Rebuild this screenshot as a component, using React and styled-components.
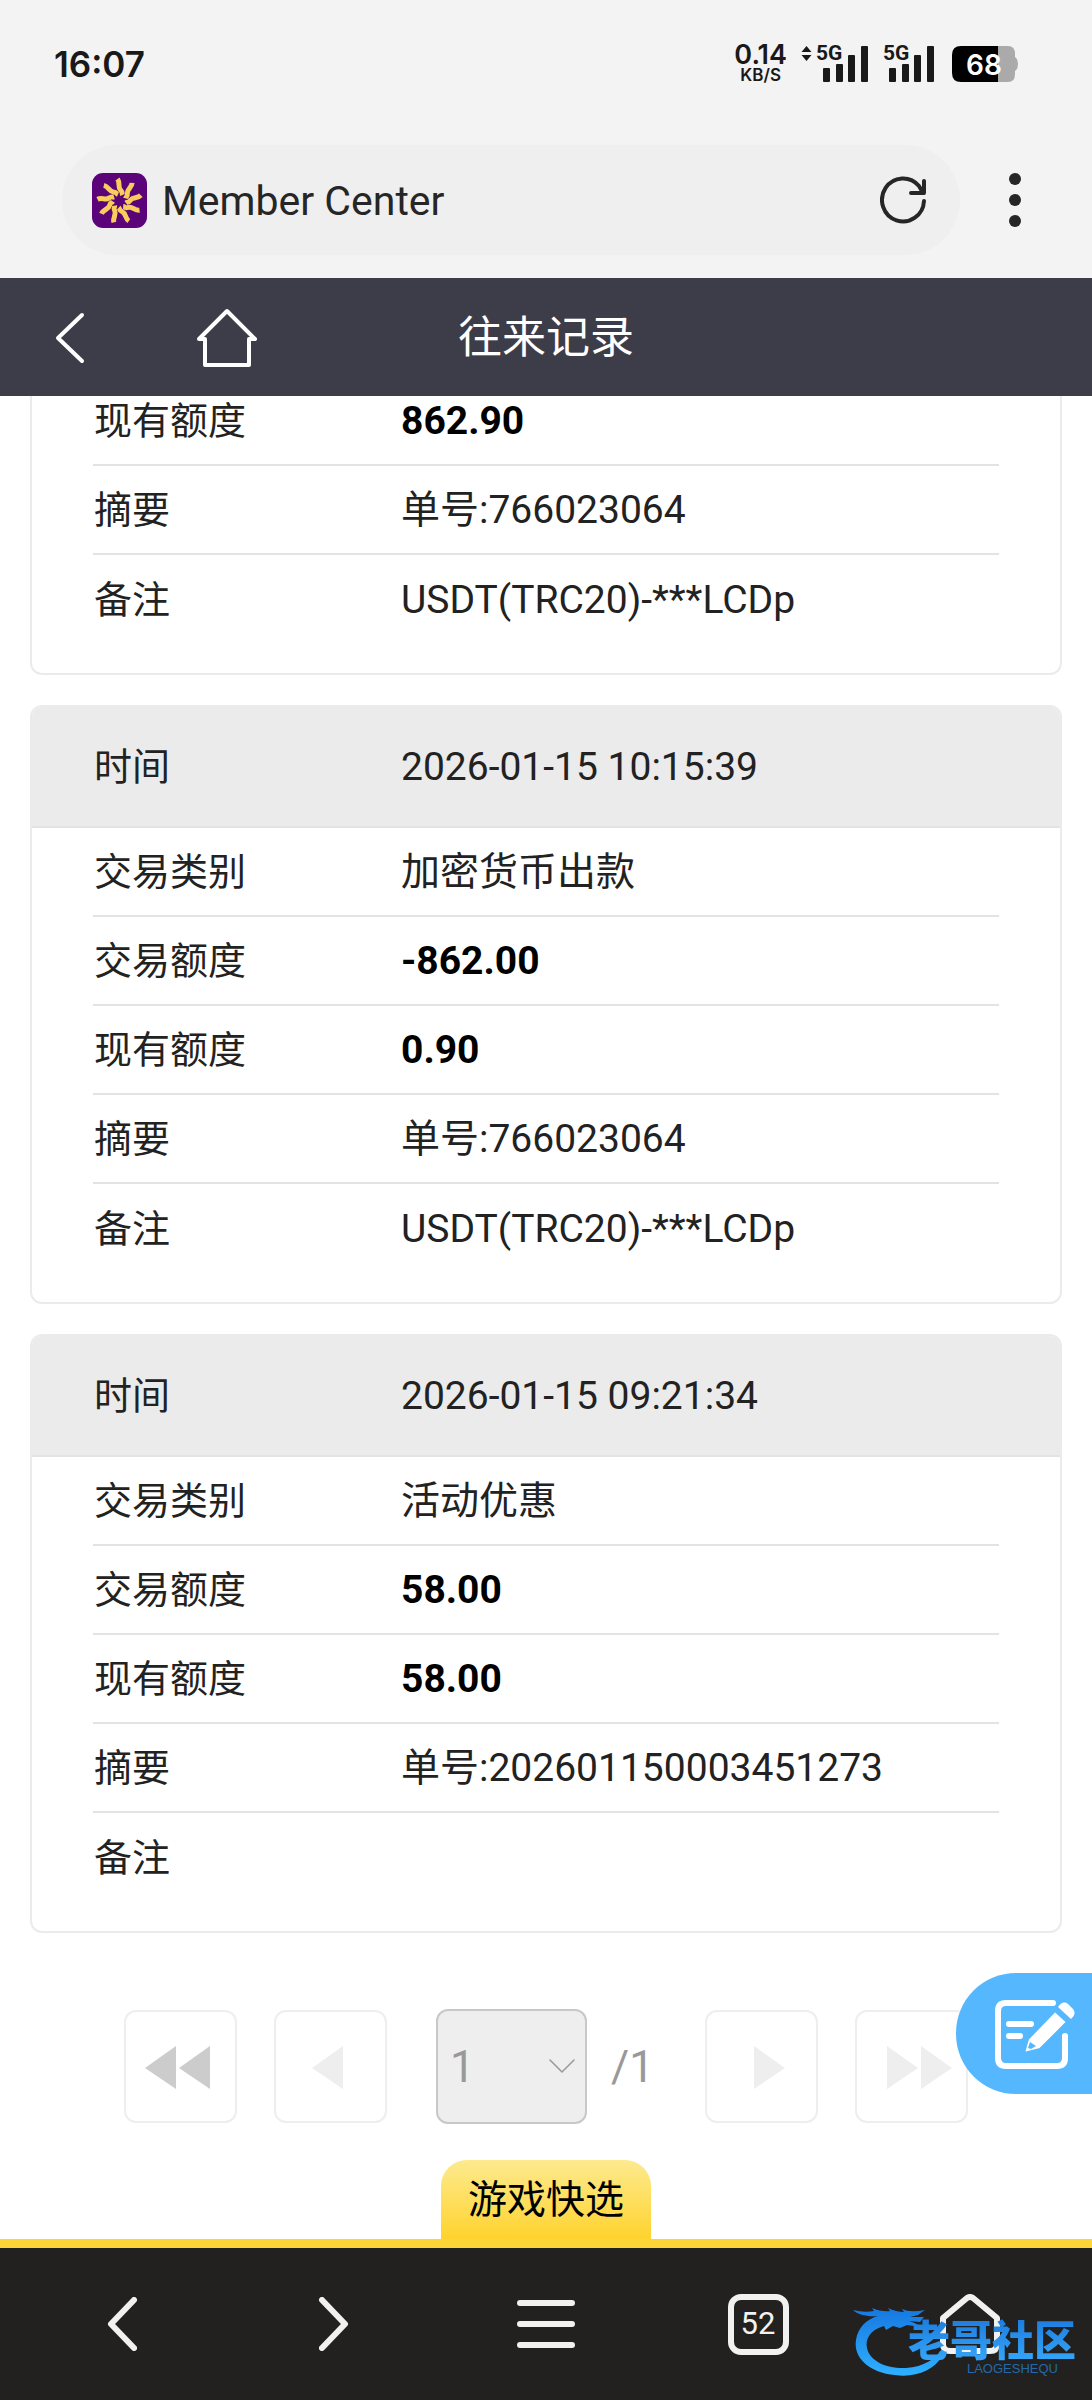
// src/App.jsx

import { useState } from "react";
import styled, { createGlobalStyle } from "styled-components";

const GlobalStyle = createGlobalStyle`
  *,
  *::before,
  *::after {
    box-sizing: border-box;
  }

  body {
    margin: 0;
    background: #fff;
    color: #222;
    font-family: Roboto, "Noto Sans CJK SC", sans-serif;
  }

  button,
  select {
    font-family: inherit;
  }
`;

const Page = styled.div`
  display: flex;
  flex-direction: column;
  min-height: 100vh;
`;

const IconButton = styled.button`
  display: flex;
  align-items: center;
  justify-content: center;
  padding: 0;
  border: none;
  background: none;
  color: inherit;
  cursor: pointer;
`;

/* ---------- phone status bar ---------- */

const StatusBar = styled.div`
  display: flex;
  align-items: center;
  justify-content: space-between;
  height: 124px;
  padding: 4px 74px 0 54px;
  background: #f3f3f3;
  color: #191919;
  font-family: Inter, sans-serif;
`;

const Clock = styled.time`
  font-size: 35px;
  font-weight: 600;
  line-height: 40px;
`;

const StatusIcons = styled.div`
  display: flex;
  align-items: center;
`;

const NetSpeed = styled.div`
  display: flex;
  flex-direction: column;
  align-items: center;
  margin-right: 14px;
  font-size: 27px;
  font-weight: 600;
  line-height: 22px;
`;

const NetUnit = styled.span`
  font-size: 17px;
  line-height: 18px;
`;

const Signal = styled.div`
  position: relative;
  display: flex;
  margin-right: ${({ $gap }) => $gap}px;
`;

const SignalLabel = styled.span`
  position: absolute;
  top: -3px;
  left: ${({ $left }) => $left}px;
  font-family: Roboto, sans-serif;
  font-size: 21px;
  font-weight: 700;
  line-height: 21px;
`;

const Battery = styled.div`
  position: relative;
  display: flex;
`;

const BatteryLevel = styled.span`
  position: absolute;
  inset: 0 2px 0 0;
  color: #fff;
  font-size: 28px;
  font-weight: 600;
  line-height: 38px;
  text-align: center;
`;

/* ---------- browser address bar ---------- */

const BrowserBar = styled.div`
  display: flex;
  align-items: center;
  height: 154px;
  padding: 0 22px 2px 62px;
  background: #f3f3f3;
  color: #262626;
`;

const AddressPill = styled.div`
  display: flex;
  flex: 1;
  align-items: center;
  gap: 15px;
  height: 110px;
  padding: 0 34px 0 30px;
  border-radius: 55px;
  background: #efefef;
`;

const PageName = styled.span`
  flex: 1;
  padding-top: 2px;
  font-size: 41px;
  line-height: 48px;
`;

const MenuButton = styled(IconButton)`
  width: 110px;
  height: 110px;
`;

/* ---------- site header ---------- */

const Header = styled.header`
  display: grid;
  grid-template-columns: 1fr auto 1fr;
  align-items: center;
  height: 118px;
  padding: 2px 46px 0;
  background: #3d3c49;
  color: #fff;
`;

const HeaderNav = styled.nav`
  display: flex;
  align-items: center;
  gap: 110px;
`;

const Title = styled.h1`
  margin: 0;
  font-size: 44px;
  font-weight: 400;
  line-height: 64px;
`;

/* ---------- records ---------- */

const Main = styled.main`
  flex: 1;
  overflow: hidden;
`;

const RecordList = styled.div`
  display: flex;
  flex-direction: column;
  gap: 30px;
  margin-top: -19px;
  padding: 0 30px;
`;

const Card = styled.dl`
  margin: 0;
  padding-bottom: 29px;
  border: 2px solid #ebebeb;
  border-radius: 12px;
  background: #fff;
  overflow: hidden;

  ${({ $open }) => $open && "border-top: none;"}
`;

const Row = styled.div`
  display: grid;
  grid-template-columns: 308px 1fr;
  align-items: center;
  height: 89px;
  margin: 0 61px;
  border-bottom: 2px solid #e3e3e3;
  font-size: 39px;
  line-height: 56px;

  &:last-child {
    border-bottom: none;
  }
`;

const HeadRow = styled(Row)`
  height: 121px;
  margin: 0;
  padding: 0 61px;
  background: #ebebeb;
`;

const Label = styled.dt`
  padding-left: 1px;
  font-size: 38px;
`;

const Value = styled.dd`
  margin: 0;
  ${({ $strong }) => $strong && "color: #000; font-weight: 700;"}
`;

/* ---------- pager ---------- */

const Pager = styled.nav`
  display: flex;
  align-items: center;
  justify-content: center;
  gap: 37px;
  padding: 76px 30px 36px;
`;

const PagerButton = styled.button`
  display: flex;
  align-items: center;
  justify-content: center;
  width: 113px;
  height: 113px;
  padding: ${({ $forward }) => ($forward ? "0 0 0 14px" : "0 6px 0 0")};
  border: 2px solid #eee;
  border-radius: 12px;
  background: #fff;
  color: ${({ $dark }) => ($dark ? "#ccc" : "#eee")};
`;

const PagerCurrent = styled.div`
  display: flex;
  align-items: center;
  gap: 24px;
  margin-left: 12px;
  color: #999;
  font-size: 44px;
`;

const SelectBox = styled.div`
  position: relative;
  width: 151px;

  svg {
    position: absolute;
    top: 50px;
    right: 12px;
    pointer-events: none;
  }
`;

const PageSelect = styled.select`
  appearance: none;
  display: block;
  width: 100%;
  height: 115px;
  padding: 0 12px;
  border: 2px solid #c8c8c8;
  border-radius: 12px;
  background: #eee;
  color: #999;
  font-size: 44px;
  opacity: 1;
`;

const PageTotal = styled.span`
  min-width: 57px;
`;

/* ---------- bottom bars ---------- */

const Footer = styled.footer`
  position: relative;
  display: flex;
  flex-direction: column;
  align-items: center;
`;

const FeedbackButton = styled(IconButton)`
  position: absolute;
  right: 0;
  bottom: 306px;
  justify-content: flex-start;
  width: 136px;
  height: 121px;
  padding-left: 37px;
  border-radius: 60px 0 0 60px;
  background: #55b8ff;
  color: #fff;
`;

const QuickTab = styled.button`
  height: 79px;
  padding: 0 27px;
  border: none;
  border-radius: 26px 26px 0 0;
  background: linear-gradient(#fdea8f, #ffd32e);
  color: #000;
  font-size: 39px;
  line-height: 56px;
`;

const BottomNav = styled.nav`
  display: grid;
  grid-template-columns: repeat(5, 1fr);
  align-items: center;
  width: 100%;
  height: 161px;
  padding: 0 16px;
  border-top: 9px solid #fdd535;
  background: #22211f;
  color: #f1f1f1;
`;

const NavButton = styled(IconButton)`
  height: 100px;
`;

const TabCount = styled.span`
  display: flex;
  align-items: center;
  justify-content: center;
  width: 61px;
  height: 61px;
  border: 6px solid #f1f1f1;
  border-radius: 13px;
  font-size: 31px;
  line-height: 36px;
`;

const Watermark = styled.div`
  position: absolute;
  right: 16px;
  bottom: 22px;
  width: 224px;
  height: 76px;
  pointer-events: none;

  svg {
    position: absolute;
    top: 0;
    left: 0;
  }
`;

const WatermarkText = styled.div`
  position: absolute;
  top: 12px;
  right: 0;
  display: flex;
  flex-direction: column;
  align-items: flex-end;
`;

const WatermarkName = styled.span`
  background: linear-gradient(#1a78dc, #36a6f8);
  background-clip: text;
  color: transparent;
  font-family: "Noto Sans CJK SC", sans-serif;
  font-size: 42px;
  font-weight: 900;
  line-height: 48px;
`;

const WatermarkSub = styled.span`
  margin-right: 18px;
  color: #246aa8;
  font-family: "Liberation Sans", sans-serif;
  font-size: 13px;
  line-height: 14px;
`;

/* ---------- icons ---------- */

const line = {
  fill: "none",
  stroke: "currentColor",
  strokeLinecap: "round",
  strokeLinejoin: "round",
};

const SignalBars = ({ arrows }) => (
  <svg width={arrows ? 67 : 51} height="36" viewBox={arrows ? "0 0 67 36" : "16 0 51 36"} fill="currentColor" aria-hidden="true">
    {arrows && <path d="M5.500 0 10.500 6H.500zM.500 9h10l-5 6z" />}
    <rect x="22" y="22" width="7" height="14" rx="1" />
    <rect x="35" y="18" width="7" height="18" rx="1" />
    <rect x="47" y="9" width="7" height="27" rx="1" />
    <rect x="60" y="0" width="7" height="36" rx="1" />
  </svg>
);

const BatteryShape = () => (
  <svg width="66" height="36" viewBox="0 0 66 36" aria-hidden="true">
    <path d="M46 0h10q7 0 7 8v3q3 2 3 7t-3 7v3q0 8-7 8H46z" fill="#aaa" />
    <path d="M9 0h37v36H9q-9 0-9-9V9q0-9 9-9z" fill="#000" />
  </svg>
);

const SiteLogo = () => (
  <svg width="55" height="55" viewBox="0 0 55 55" aria-hidden="true">
    <rect width="55" height="55" rx="11" fill="#5b0378" />
    {Array.from({ length: 9 }, (_, i) => (
      <path
        key={i}
        d="M-2-22C1-18-2-14 1-11S2-8 3-6"
        transform={`translate(27.500 28) rotate(${i * 40})`}
        fill="none"
        stroke="#f8cd5c"
        strokeWidth="5"
      />
    ))}
  </svg>
);

const ReloadIcon = () => (
  <svg width="46" height="48" viewBox="0 0 46 48" {...line} strokeWidth="4" aria-hidden="true">
    <path d="M44 25A21 21.500 0 1 1 39 10L43 17" />
    <path d="M44 5V17H31" />
  </svg>
);

const DotsIcon = () => (
  <svg width="12" height="56" viewBox="0 0 12 56" fill="currentColor" aria-hidden="true">
    <circle cx="6" cy="7" r="6" />
    <circle cx="6" cy="28" r="6" />
    <circle cx="6" cy="49" r="6" />
  </svg>
);

const HeaderBack = () => (
  <svg width="40" height="54" viewBox="0 0 40 54" {...line} strokeWidth="4" aria-hidden="true">
    <path d="M36 4 12 27 36 50" />
  </svg>
);

const HeaderHome = () => (
  <svg width="62" height="60" viewBox="0 0 62 60" {...line} strokeWidth="4" aria-hidden="true">
    <path d="M9 31H3L31 3 59 31H53V57H9z" />
  </svg>
);

const Triangles = ({ left, double }) => (
  <svg width={double ? 66 : 32} height="44" viewBox={double ? "0 0 66 44" : "0 0 32 44"} fill="currentColor" aria-hidden="true">
    <g transform={left ? undefined : `translate(${double ? 66 : 32} 0) scale(-1 1)`}>
      <path d="M0 23 31 1V44z" />
      {double && <path d="M34 23 65 1V44z" />}
    </g>
  </svg>
);

const ChevronDown = () => (
  <svg width="27" height="15" viewBox="0 0 27 15" {...line} stroke="#999" strokeWidth="1.500" aria-hidden="true">
    <path d="M2 1 14 13 26 1" />
  </svg>
);

const FeedbackIcon = () => (
  <svg width="82" height="72" viewBox="0 0 82 72" aria-hidden="true">
    <g {...line} strokeWidth="6">
      <path d="M60 5H13Q5 5 5 13V60Q5 68 13 68H64Q72 68 72 60V38" />
      <path d="M16 26H38M16 38H27" />
    </g>
    <path
      d="M62 13 74 24 47 51 31 55 35 41z"
      fill="currentColor"
      stroke="#55b8ff"
      strokeWidth="2"
    />
    <path d="M65 9Q70 2 75 6L80 11Q84 16 78 21z" fill="currentColor" />
    <path d="M37 44 43 48 38 51 35 50z" fill="#55b8ff" />
  </svg>
);

const NavChevron = ({ right }) => (
  <svg width="30" height="54" viewBox="0 0 30 54" {...line} strokeWidth="6" aria-hidden="true">
    <path d={right ? "M3 3 26 27 3 51" : "M27 3 4 27 27 51"} />
  </svg>
);

const MenuIcon = () => (
  <svg width="58" height="48" viewBox="0 0 58 48" {...line} strokeWidth="6" aria-hidden="true">
    <path d="M3 3H55M3 24H55M3 45H55" />
  </svg>
);

const NavHome = () => (
  <svg width="60" height="60" viewBox="0 0 60 60" {...line} strokeWidth="6" aria-hidden="true">
    <path d="M3 24 27 4Q30 2 33 4L57 24V50Q57 57 50 57H10Q3 57 3 50z" />
  </svg>
);

const DragonMark = () => (
  <svg width="100" height="76" viewBox="0 0 100 76" aria-hidden="true">
    <defs>
      <linearGradient id="dragon" x1="0" y1="0" x2="0" y2="1">
        <stop offset="0" stopColor="#1678e0" />
        <stop offset="1" stopColor="#2fb0ff" />
      </linearGradient>
    </defs>
    <path
      fill="url(#dragon)"
      d="M1 8Q12 11 22 9L20 6Q30 10 38 9L36 6Q44 10 52 10L50 7Q58 11 73 8L66 13 58 15H72L68 20 57 19Q66 22 69 25L55 23 48 26 41 24 34 28 32 24C18 28 13 37 15 46 18 60 36 67 54 66 72 65 84 56 88 49 92 47 93 50 91 53 82 69 62 76 43 73 18 71 1 56 4 38 6 25 15 17 26 14 16 15 6 13 1 8z"
    />
  </svg>
);

/* ---------- data ---------- */

const records = [
  {
    id: "deposit",
    rows: [
      { label: "现有额度", value: "862.90", strong: true },
      { label: "摘要", value: "单号:766023064" },
      { label: "备注", value: "USDT(TRC20)-***LCDp" },
    ],
  },
  {
    id: "withdraw",
    time: "2026-01-15 10:15:39",
    rows: [
      { label: "交易类别", value: "加密货币出款" },
      { label: "交易额度", value: "-862.00", strong: true },
      { label: "现有额度", value: "0.90", strong: true },
      { label: "摘要", value: "单号:766023064" },
      { label: "备注", value: "USDT(TRC20)-***LCDp" },
    ],
  },
  {
    id: "bonus",
    time: "2026-01-15 09:21:34",
    rows: [
      { label: "交易类别", value: "活动优惠" },
      { label: "交易额度", value: "58.00", strong: true },
      { label: "现有额度", value: "58.00", strong: true },
      { label: "摘要", value: "单号:202601150003451273" },
      { label: "备注", value: "" },
    ],
  },
];

function RecordCard({ record }) {
  return (
    <Card $open={!record.time}>
      {record.time && (
        <HeadRow>
          <Label>时间</Label>
          <Value>{record.time}</Value>
        </HeadRow>
      )}
      {record.rows.map((row) => (
        <Row key={row.label}>
          <Label>{row.label}</Label>
          <Value $strong={row.strong}>{row.value}</Value>
        </Row>
      ))}
    </Card>
  );
}

export default function App() {
  const [page, setPage] = useState("1");

  return (
    <>
      <GlobalStyle />
      <Page>
        <StatusBar>
          <Clock>16:07</Clock>
          <StatusIcons>
            <NetSpeed>
              0.14
              <NetUnit>KB/S</NetUnit>
            </NetSpeed>
            <Signal $gap={15}>
              <SignalBars arrows />
              <SignalLabel $left={15}>5G</SignalLabel>
            </Signal>
            <Signal $gap={18}>
              <SignalBars />
              <SignalLabel $left={0}>5G</SignalLabel>
            </Signal>
            <Battery>
              <BatteryShape />
              <BatteryLevel>68</BatteryLevel>
            </Battery>
          </StatusIcons>
        </StatusBar>

        <BrowserBar>
          <AddressPill>
            <SiteLogo />
            <PageName>Member Center</PageName>
            <IconButton type="button" aria-label="刷新">
              <ReloadIcon />
            </IconButton>
          </AddressPill>
          <MenuButton type="button" aria-label="更多">
            <DotsIcon />
          </MenuButton>
        </BrowserBar>

        <Header>
          <HeaderNav>
            <IconButton type="button" aria-label="返回">
              <HeaderBack />
            </IconButton>
            <IconButton type="button" aria-label="首页">
              <HeaderHome />
            </IconButton>
          </HeaderNav>
          <Title>往来记录</Title>
        </Header>

        <Main>
          <RecordList>
            {records.map((record) => (
              <RecordCard key={record.id} record={record} />
            ))}
          </RecordList>

          <Pager aria-label="分页">
            <PagerButton type="button" aria-label="第一页" disabled $dark>
              <Triangles left double />
            </PagerButton>
            <PagerButton type="button" aria-label="上一页" disabled>
              <Triangles left />
            </PagerButton>
            <PagerCurrent>
              <SelectBox>
                <PageSelect
                  aria-label="页码"
                  value={page}
                  onChange={(e) => setPage(e.target.value)}
                  disabled
                >
                  <option value="1">1</option>
                </PageSelect>
                <ChevronDown />
              </SelectBox>
              <PageTotal>/1</PageTotal>
            </PagerCurrent>
            <PagerButton type="button" aria-label="下一页" disabled $forward>
              <Triangles />
            </PagerButton>
            <PagerButton type="button" aria-label="最后一页" disabled $forward>
              <Triangles double />
            </PagerButton>
          </Pager>
        </Main>

        <Footer>
          <FeedbackButton type="button" aria-label="意见反馈">
            <FeedbackIcon />
          </FeedbackButton>
          <QuickTab type="button">游戏快选</QuickTab>
          <BottomNav>
            <NavButton type="button" aria-label="后退">
              <NavChevron />
            </NavButton>
            <NavButton type="button" aria-label="前进">
              <NavChevron right />
            </NavButton>
            <NavButton type="button" aria-label="菜单">
              <MenuIcon />
            </NavButton>
            <NavButton type="button" aria-label="标签页">
              <TabCount>52</TabCount>
            </NavButton>
            <NavButton type="button" aria-label="主页">
              <NavHome />
            </NavButton>
          </BottomNav>
          <Watermark>
            <DragonMark />
            <WatermarkText>
              <WatermarkName>老哥社区</WatermarkName>
              <WatermarkSub>LAOGESHEQU</WatermarkSub>
            </WatermarkText>
          </Watermark>
        </Footer>
      </Page>
    </>
  );
}
